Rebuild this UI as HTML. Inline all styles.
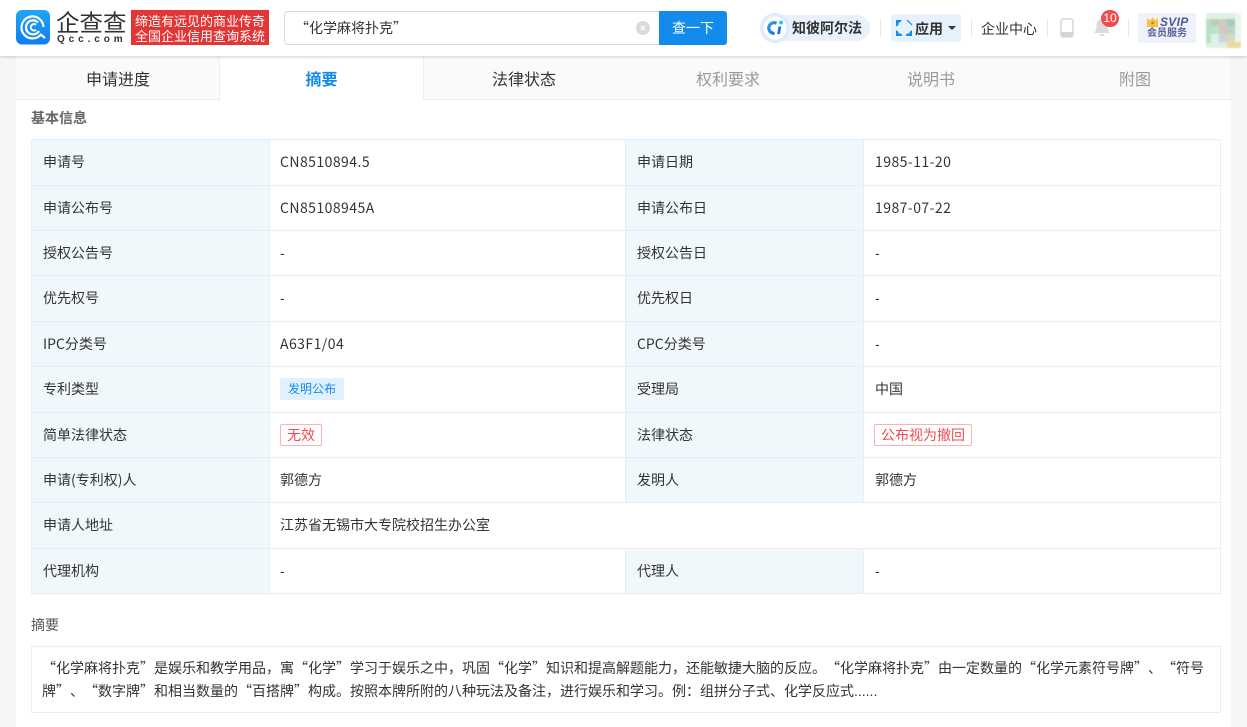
<!DOCTYPE html>
<html lang="zh-CN"><head><meta charset="utf-8"><title>专利详情</title>
<style>
*{box-sizing:border-box}
html,body{margin:0;padding:0}
body{width:1247px;height:727px;overflow:hidden;background:#f6f6f6;position:relative;font-family:"Liberation Sans","Noto Sans CJK SC",sans-serif;font-size:14px;color:#333;text-spacing-trim:space-all}
.a{position:absolute;white-space:nowrap}
#hd{position:absolute;left:0;top:0;width:1247px;height:56px;background:#fff;box-shadow:0 1px 3px rgba(0,0,0,.2);z-index:3}
#main{position:absolute;left:16px;top:56px;width:1215px;height:671px;background:#fff}
.tab{position:absolute;top:57px;height:43px;line-height:47px;text-align:center;font-size:16px;color:#333;width:204px;z-index:2}
.cell{position:absolute;height:20px;line-height:20px;white-space:nowrap;font-size:14px;color:#333}
.hl{position:absolute;background:#f0f8fc;}
.ln{position:absolute;background:#e6eff7}
.cjk{font-family:"Noto Sans CJK SC","Liberation Sans",sans-serif;text-spacing-trim:space-all;font-feature-settings:"palt" 0}
.num{font-family:"Noto Sans CJK SC","Liberation Sans",sans-serif;letter-spacing:.45px}
</style></head><body>
<div id="main"></div>
<div class="a" style="left:16px;top:57px;width:1215px;height:43px;background:#fafafa;border-bottom:1px solid #eee"></div>
<div class="a" style="left:219px;top:57px;width:205px;height:44px;background:#fff;border-left:1px solid #eee;border-right:1px solid #eee;z-index:1"></div>
<div class="tab" style="left:16px">申请进度</div>
<div class="tab" style="left:219.500px;color:#128bed;font-weight:bold">摘要</div>
<div class="tab" style="left:422px">法律状态</div>
<div class="tab" style="left:626px;color:#999">权利要求</div>
<div class="tab" style="left:829px;color:#999">说明书</div>
<div class="tab" style="left:1033px;color:#999">附图</div>

<div id="hd">
 <svg class="a" style="left:16px;top:10px" width="35" height="35" viewBox="0 0 35 35"><defs><linearGradient id="g" x1="0" y1="0" x2="0" y2="1"><stop offset="0" stop-color="#1fa6f5"/><stop offset="1" stop-color="#0f7df0"/></linearGradient><linearGradient id="c" x1="0" y1="0" x2="1" y2="1"><stop offset="0" stop-color="#35a0f5"/><stop offset="1" stop-color="#1565e6"/></linearGradient></defs><rect width="34" height="34.500" rx="6" fill="url(#g)"/><path d="M24.500 25A11 11 0 1 1 27.500 17" fill="none" stroke="#fff" stroke-width="2.200"/><path d="M22 12.500A7 7 0 1 0 23 21" fill="none" stroke="#fff" stroke-width="2.200"/><path d="M20 14.800A3.200 3.200 0 1 0 20 19.800" fill="none" stroke="#fff" stroke-width="2"/><path d="M24 24l5 4" stroke="#fff" stroke-width="2.200"/></svg>
 <div class="a" style="left:56px;top:7px;font-size:23.500px;line-height:32px;color:#333">企查查</div>
 <div class="a" style="left:57px;top:33.500px;font-size:10px;line-height:12px;letter-spacing:3.900px;color:#333;font-weight:bold">Qcc.com</div>
 <div class="a" style="left:131px;top:10px;width:138px;height:35px;background:#e23535;color:#fff;font-size:13px;line-height:15px;padding:3.500px 0 0 4px;white-space:normal">缔造有远见的商业传奇<br>全国企业信用查询系统</div>
 <div class="a cjk" style="left:284px;top:11px;width:376px;height:34px;border:1px solid #d8d8d8;border-right:0;border-radius:4px 0 0 4px;background:#fff;font-size:14px;line-height:33px;padding-left:10px;color:#333">“化学麻将扑克”</div>
 <svg class="a" style="left:636px;top:21px" width="14" height="14"><circle cx="7" cy="7" r="7" fill="#d9d9d9"/><path d="M4.800 4.800l4.400 4.400M9.200 4.800l-4.400 4.400" stroke="#fff" stroke-width="1.200"/></svg>
 <div class="a" style="left:659px;top:11px;width:68px;height:34px;background:#128bed;border-radius:0 3px 3px 0;color:#fff;text-align:center;line-height:34px;font-size:14px">查一下</div>

 <div class="a" style="left:766px;top:15px;width:104px;height:26px;background:#e9f1fd;border-radius:13px"></div>
 <svg class="a" style="left:760px;top:13px" width="30" height="30"><circle cx="15" cy="15" r="15" fill="#dfeafc"/><circle cx="15" cy="15" r="11.500" fill="#fff"/><path d="M16.500 10.300A5.300 5.300 0 1 0 14.500 20.300" fill="none" stroke="url(#c)" stroke-width="3.200"/><path d="M18.500 13.500h2.800L20 21h-2.800z" fill="#1671e8"/><circle cx="21" cy="9.500" r="1.900" fill="#18c8f0"/></svg>
 <div class="a" style="left:792px;top:18px;font-size:14px;line-height:20px;font-weight:bold;color:#333">知彼阿尔法</div>
 <div class="a" style="left:880px;top:19px;width:1px;height:18px;background:#e8e8e8"></div>
 <div class="a" style="left:891px;top:14px;width:70px;height:28px;background:#e6f1fc;border-radius:4px"></div>
 <svg class="a" style="left:895px;top:19px" width="18" height="18" viewBox="0 0 18 18"><path d="M1 1h6L5 3.500H3.500V6L1 7.500z" fill="#128bed"/><path d="M12 1l5 5" stroke="#128bed" stroke-width="1.200" fill="none"/><path d="M1 11l2.500 2v1.500H6L7.500 17H1z" fill="#128bed"/><path d="M17 11l-2.500 2v1.500H12L10.500 17H17z" fill="#128bed"/></svg>
 <div class="a" style="left:915px;top:19px;font-size:14px;line-height:20px;font-weight:bold;color:#333">应用</div>
 <div class="a" style="left:948px;top:26px;width:0;height:0;border:4px solid transparent;border-top:4px solid #333;border-bottom:0"></div>
 <div class="a" style="left:971px;top:19px;width:1px;height:18px;background:#e8e8e8"></div>
 <div class="a" style="left:981px;top:19px;font-size:14px;line-height:20px;color:#333">企业中心</div>
 <div class="a" style="left:1047px;top:19px;width:1px;height:18px;background:#e8e8e8"></div>
 <svg class="a" style="left:1060px;top:18px" width="14" height="20" fill="none"><rect x="1" y="1" width="12" height="18" rx="2.500" stroke="#d5d5d5" stroke-width="1.500"/><rect x="1" y="14" width="12" height="5" rx="1.500" fill="#d5d5d5"/></svg>
 <svg class="a" style="left:1093px;top:18px" width="18" height="20"><path d="M9 1C5 1 3.500 4.500 3.500 8c0 3.500-1 5.500-2.500 7h16c-1.500-1.500-2.500-3.500-2.500-7C14.500 4.500 13 1 9 1z" fill="#dcdcdc"/><rect x="7" y="16" width="4" height="2" fill="#dcdcdc"/></svg>
 <div class="a" style="left:1101px;top:10px;width:18px;height:17px;border-radius:9px;background:#f04b50;color:#fff;font-size:12px;line-height:17px;text-align:center">10</div>
 <div class="a" style="left:1128px;top:19px;width:1px;height:18px;background:#e8e8e8"></div>
 <div class="a" style="left:1138px;top:13px;width:58px;height:30px;background:#eff1fb;border-radius:2px"></div>
 <svg class="a" style="left:1147px;top:17px" width="11" height="10"><path d="M0 1l3 2.500L5.500 0 8 3.500 11 1v9H0z" fill="#f5c242"/><path d="M4 6l1.500-1.500L7 6 5.500 7.500z" fill="#a6812a"/></svg>
 <div class="a" style="left:1160px;top:15px;font-size:12px;line-height:14px;font-weight:bold;font-style:italic;color:#4f5a94;letter-spacing:.3px">SVIP</div>
 <div class="a" style="left:1147px;top:27px;font-size:10px;line-height:14px;font-weight:bold;color:#5a6496">会员服务</div>
 <div class="a" style="left:1205px;top:12px;width:37px;height:37px;overflow:hidden">
 <svg style="position:absolute;left:1px;top:1px;filter:blur(.8px)" width="35" height="35" shape-rendering="crispEdges"><rect width="35" height="35" fill="#dff1e4"/><rect x="0" y="6" width="5" height="24" fill="#b5e3c3"/><rect x="5" y="6" width="8" height="7" fill="#c3c9b4"/><rect x="5" y="13" width="8" height="8" fill="#b9e4c8"/><rect x="13" y="6" width="8" height="7" fill="#c9cfc5"/><rect x="13" y="13" width="8" height="8" fill="#d9c6bd"/><rect x="21" y="6" width="8" height="7" fill="#a9cbbf"/><rect x="21" y="13" width="8" height="8" fill="#bcd2c9"/><rect x="13" y="21" width="8" height="8" fill="#c9d3d9"/><rect x="21" y="21" width="8" height="8" fill="#d2dcbe"/><rect x="21" y="29" width="14" height="6" fill="#ecd9a0"/><rect x="29" y="0" width="6" height="29" fill="#f0f6ee" opacity=".7"/></svg></div>
</div>

<div class="a" style="left:31px;top:108px;font-size:14px;line-height:20px;font-weight:bold;color:#666">基本信息</div>

<div class="hl" style="left:32px;top:140px;width:237px;height:453px"></div>
<div class="hl" style="left:626px;top:140px;width:237px;height:362px"></div>
<div class="hl" style="left:626px;top:549px;width:237px;height:44px"></div>

<div class="ln" style="left:31px;top:139px;width:1190px;height:1px"></div>
<div class="ln" style="left:31px;top:185px;width:1190px;height:1px"></div>
<div class="ln" style="left:31px;top:230px;width:1190px;height:1px"></div>
<div class="ln" style="left:31px;top:275px;width:1190px;height:1px"></div>
<div class="ln" style="left:31px;top:321px;width:1190px;height:1px"></div>
<div class="ln" style="left:31px;top:366px;width:1190px;height:1px"></div>
<div class="ln" style="left:31px;top:412px;width:1190px;height:1px"></div>
<div class="ln" style="left:31px;top:457px;width:1190px;height:1px"></div>
<div class="ln" style="left:31px;top:502px;width:1190px;height:1px"></div>
<div class="ln" style="left:31px;top:548px;width:1190px;height:1px"></div>
<div class="ln" style="left:31px;top:593px;width:1190px;height:1px"></div>
<div class="ln" style="left:31px;top:139px;width:1px;height:455px"></div>
<div class="ln" style="left:269px;top:139px;width:1px;height:455px"></div>
<div class="ln" style="left:625px;top:139px;width:1px;height:364px"></div>
<div class="ln" style="left:625px;top:548px;width:1px;height:46px"></div>
<div class="ln" style="left:863px;top:139px;width:1px;height:364px"></div>
<div class="ln" style="left:863px;top:548px;width:1px;height:46px"></div>
<div class="ln" style="left:1220px;top:139px;width:1px;height:455px"></div>

<div class="cell" style="left:43px;top:152px">申请号</div><div class="cell num" style="left:280px;top:152px">CN8510894.5</div><div class="cell" style="left:637px;top:152px">申请日期</div><div class="cell num" style="left:875px;top:152px">1985-11-20</div>
<div class="cell" style="left:43px;top:198px">申请公布号</div><div class="cell num" style="left:280px;top:198px">CN85108945A</div><div class="cell" style="left:637px;top:198px">申请公布日</div><div class="cell num" style="left:875px;top:198px">1987-07-22</div>
<div class="cell" style="left:43px;top:243px">授权公告号</div><div class="cell" style="left:280px;top:243px">-</div><div class="cell" style="left:637px;top:243px">授权公告日</div><div class="cell" style="left:875px;top:243px">-</div>
<div class="cell" style="left:43px;top:288px">优先权号</div><div class="cell" style="left:280px;top:288px">-</div><div class="cell" style="left:637px;top:288px">优先权日</div><div class="cell" style="left:875px;top:288px">-</div>
<div class="cell" style="left:43px;top:334px"><span class="cjk">IPC分类号</span></div><div class="cell num" style="left:280px;top:334px">A63F1/04</div><div class="cell" style="left:637px;top:334px"><span class="cjk">CPC分类号</span></div><div class="cell" style="left:875px;top:334px">-</div>
<div class="cell" style="left:43px;top:379px">专利类型</div><div class="a" style="left:280px;top:378px;width:64px;height:22px;background:#e1f0fd;border-radius:2px;color:#128bed;font-size:12px;line-height:22px;text-align:center">发明公布</div><div class="cell" style="left:637px;top:379px">受理局</div><div class="cell" style="left:875px;top:379px">中国</div>
<div class="cell" style="left:43px;top:425px">简单法律状态</div><div class="a" style="left:280px;top:424px;width:42px;height:22px;border:1px solid #ffb0b0;border-radius:2px;color:#f04b50;font-size:14px;line-height:20px;text-align:center">无效</div><div class="cell" style="left:637px;top:425px">法律状态</div><div class="a" style="left:874px;top:424px;width:98px;height:22px;border:1px solid #ffb0b0;border-radius:2px;color:#f04b50;font-size:14px;line-height:20px;text-align:center">公布视为撤回</div>
<div class="cell" style="left:43px;top:470px"><span class="cjk">申请(专利权)人</span></div><div class="cell" style="left:280px;top:470px">郭德方</div><div class="cell" style="left:637px;top:470px">发明人</div><div class="cell" style="left:875px;top:470px">郭德方</div>
<div class="cell" style="left:43px;top:515px">申请人地址</div><div class="cell" style="left:280px;top:515px">江苏省无锡市大专院校招生办公室</div>
<div class="cell" style="left:43px;top:561px">代理机构</div><div class="cell" style="left:280px;top:561px">-</div><div class="cell" style="left:637px;top:561px">代理人</div><div class="cell" style="left:875px;top:561px">-</div>

<div class="a" style="left:31px;top:615px;font-size:14px;line-height:20px;color:#555">摘要</div>
<div class="a" style="left:31px;top:646px;width:1190px;height:67px;border:1px solid #e6eff7"></div>
<div class="a cjk" style="left:42px;top:657px;font-size:14px;line-height:23px">“化学麻将扑克”是娱乐和教学用品，寓“化学”学习于娱乐之中，巩固“化学”知识和提高解题能力，还能敏捷大脑的反应。“化学麻将扑克”由一定数量的“化学元素符号牌”、“符号</div>
<div class="a cjk" style="left:42px;top:680px;font-size:14px;line-height:23px">牌”、“数字牌”和相当数量的“百搭牌”构成。按照本牌所附的八种玩法及备注，进行娱乐和学习。例：组拼分子式、化学反应式<span style="font-family:'Liberation Sans',sans-serif">......</span></div>
</body></html>
